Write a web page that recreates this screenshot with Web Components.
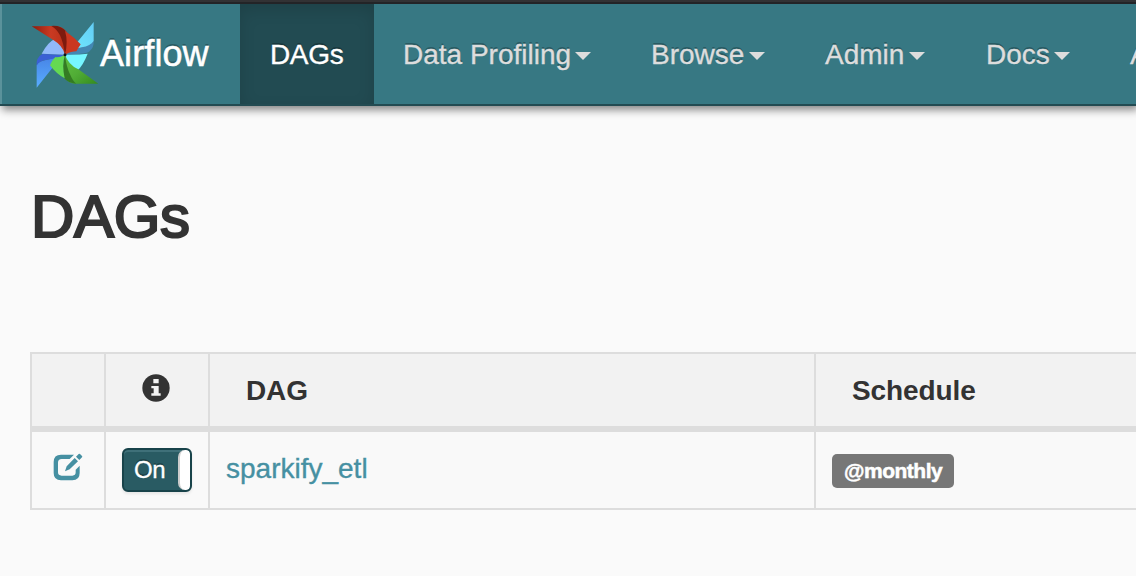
<!DOCTYPE html>
<html lang="en">
<head>
<meta charset="utf-8">
<title>Airflow - DAGs</title>
<style>
html,body{margin:0;height:100%;overflow:hidden;background:#fafafa}
body{font-family:"Liberation Sans",Arial,sans-serif;color:#333}
</style>
</head>
<body>
<af-app></af-app>
<script>
const define = (name, html) => customElements.define(name, class extends HTMLElement {
  constructor() {
    super();
    const t = document.createElement('template');
    t.innerHTML = html;
    this.attachShadow({ mode: 'open' }).append(t.content.cloneNode(true));
  }
});

define('af-logo', `<style>:host{display:block;width:80px;height:80px}svg{display:block}</style>
<svg width="80" height="80" viewBox="0 0 240 240">
<defs>
<linearGradient id="c" x1="1" y1="0" x2="0" y2="1"><stop stop-color="#63cdf6"/><stop offset="1" stop-color="#72edff"/></linearGradient>
<linearGradient id="b" x1="0" y1="0" x2="0" y2="1"><stop stop-color="#4681e4"/><stop offset="1" stop-color="#59adff"/></linearGradient>
<linearGradient id="r"><stop stop-color="#8d1b0c"/><stop offset=".55" stop-color="#c93a22"/><stop offset="1" stop-color="#b83018"/></linearGradient>
<linearGradient id="g" x1="0" y1="0" x2="1" y2="1"><stop stop-color="#5fbf40"/><stop offset=".5" stop-color="#51ad36"/><stop offset="1" stop-color="#348a1e"/></linearGradient>
</defs>
<path d="M206 21V78Q202 94 160 104L120 119Q136 108 150 90Z" fill="url(#c)"/>
<path d="M206 78Q208 98 192 110Q178 118 120 119Q144 101 170 97Q197 93 206 78Z" fill="#4387b3"/>
<path d="M120 119Q160 120 188 116Q174 152 156 168Q134 160 124 140Z" fill="#76f6ff"/>
<path d="M35 218V150Q38 138 76 132L120 119Q102 127 89 150Z" fill="url(#b)"/>
<path d="M35 152Q33 127 52 117L120 119Q94 131 66 134Q41 137 35 152Z" fill="#3b60d4"/>
<path d="M120 119L50 116Q68 82 89 72Q109 77 117 96Z" fill="#91b9fa"/>
<path d="M20 34L91 33Q115 35 124 50L120 119Q113 92 86 76Z" fill="url(#r)"/>
<path d="M79 33Q106 30 124 50Q134 80 120 119Q115 82 105 61Q96 43 79 33Z" fill="#7d1b0e"/>
<path d="M120 47Q148 67 167 88L154 109Q140 109 120 119Q130 81 120 47Z" fill="#ca3820"/>
<path d="M220 206H151Q130 205 119 188L120 119Q130 149 160 163Z" fill="url(#g)"/>
<path d="M120 119Q124 156 136 180Q144 199 154 206Q129 205 118 190Q109 153 120 119Z" fill="#347b23"/>
<path d="M120 119Q110 149 119 190Q93 176 75 151Q80 137 91 126Q103 129 120 119Z" fill="#65d952"/>
<circle cx="120" cy="119" r="4.5" fill="#10141a"/>
</svg>`);

define('af-nav-item', `<style>
:host{display:flex;box-sizing:border-box;height:100px;padding:0 31px 0 29px;font-size:28px;line-height:98px;color:#ddd;-webkit-text-stroke:.35px;text-shadow:0 -2px 0 rgba(0,0,0,.25);justify-content:space-between;align-items:center;flex:none;white-space:nowrap}
:host([active]){color:#fff;background:#224b52;box-shadow:inset 0 6px 16px rgba(0,0,0,.125);padding-left:30px;letter-spacing:-.35px}
span{padding-top:2px}
i{display:none;flex:none;border:8px solid transparent;border-top-color:#ddd;border-bottom:0;margin-top:4px}
:host([menu]) i{display:block}
</style><span><slot></slot></span><i></i>`);

define('af-navbar', `<style>
:host{display:block;border-top:2px solid #323234;box-sizing:border-box;height:106px;box-shadow:2px 4px 8px #888}
nav{display:flex;box-sizing:border-box;height:104px;border-top:2px solid #232427;border-bottom:2px solid #234b52;background:#377883;overflow:hidden}
.brand{display:flex;box-sizing:border-box;width:240px;flex:none;padding-left:23px;border-left:2px solid #5b929b;color:#fff;font-size:36px;line-height:100px;-webkit-text-stroke:.5px;letter-spacing:.1px;text-shadow:0 -2px 0 rgba(0,0,0,.25)}
af-logo{margin-top:11px;margin-right:-5px;flex:none}
</style><nav><div class="brand"><af-logo></af-logo><span>Airflow</span></div>
<af-nav-item active style="width:134px">DAGs</af-nav-item>
<af-nav-item menu style="width:248px">Data Profiling</af-nav-item>
<af-nav-item menu style="width:174px">Browse</af-nav-item>
<af-nav-item menu style="width:160px">Admin</af-nav-item>
<af-nav-item menu style="width:145px;padding-left:30px">Docs</af-nav-item>
<af-nav-item menu style="width:164px">About</af-nav-item></nav>`);

define('af-info', `<style>:host{display:block;height:28px}svg{display:block}</style>
<svg width="28" height="28" viewBox="0 0 84 84"><circle cx="42" cy="42" r="41" fill="#333"/><path d="M34 15H50V28H34ZM28 36H50V58H56V65H28V58H35V43H28Z" fill="#f2f2f2"/></svg>`);

define('af-edit', `<style>:host{display:block;height:28px}svg{display:block}</style>
<svg width="30" height="28" viewBox="0 0 90 84" fill="#4690a2"><path d="M63 5H24Q2 5 2 27V60Q2 82 24 82H58Q80 82 80 60V38L68 50V58Q68 68 58 68H26Q15 68 15 58V29Q15 18 26 18H50Z"/><path d="M36 55L41 40L65 15L75 25L50 49ZM69 11L77 3Q79 1 81 3L87 9Q89 11 87 13L79 21Z"/></svg>`);

define('af-toggle', `<style>
:host{display:flex;box-sizing:border-box;width:70px;height:44px;border:2px solid #18434a;border-radius:6px;background:#295b63;box-shadow:inset 0 2px 0 #3f7079,0 2px 3px rgba(0,0,0,.08);overflow:hidden;color:#fff;font-size:24px;line-height:40px;-webkit-text-stroke:.3px;letter-spacing:-.3px;text-shadow:0 -2px 0 rgba(0,0,0,.25)}
span{flex:1;padding-left:10px}
b{box-sizing:border-box;width:12px;border-left:2px solid #ccc;border-radius:7px 4px 4px 7px;background:#fff}
</style><span><slot></slot></span><b></b>`);

define('af-badge', `<style>
:host{display:block;box-sizing:border-box;width:122px;height:34px;padding-left:12px;border-radius:5px;background:#777;color:#fff;font-weight:bold;font-size:21px;line-height:33px;letter-spacing:-.5px;-webkit-text-stroke:.5px #fff}
</style><slot></slot>`);

define('af-table', `<style>
:host{display:block}
.grid{display:grid;grid-template-columns:72px 102px 604px 1fr;grid-template-rows:72px 76px;column-gap:2px;row-gap:6px;border:2px solid #ddd;border-right:0;background:#ddd;font-size:28px}
.grid>div{display:flex;align-items:center;background:#f9f9f9}
.grid>.h{background:#f2f2f2;font-weight:bold;padding:1px 0 0 36px;box-sizing:border-box;letter-spacing:-.1px}
.grid>.h.c{padding:0 2px 4px 0;justify-content:center}
a{color:#4690a2;-webkit-text-stroke:.35px}
</style><div class="grid">
<div class="h"></div><div class="h c"><af-info></af-info></div><div class="h">DAG</div><div class="h">Schedule</div>
<div style="padding:0 0 7px 21px"><af-edit></af-edit></div>
<div style="padding-left:16px"><af-toggle>On</af-toggle></div>
<div style="padding:0 0 2px 16px"><a>sparkify_etl</a></div>
<div style="padding:2px 0 0 16px"><af-badge>@monthly</af-badge></div></div>`);

define('af-app', `<style>
:host{display:block}
main{padding:78px 0 0 30px}
h1{margin:0 0 102px;padding-left:1px;height:66px;line-height:66px;font-size:60px;font-weight:normal;letter-spacing:-.3px;-webkit-text-stroke:2.2px #333}
</style><af-navbar></af-navbar><main><h1>DAGs</h1><af-table></af-table></main>`);
</script>
</body>
</html>
